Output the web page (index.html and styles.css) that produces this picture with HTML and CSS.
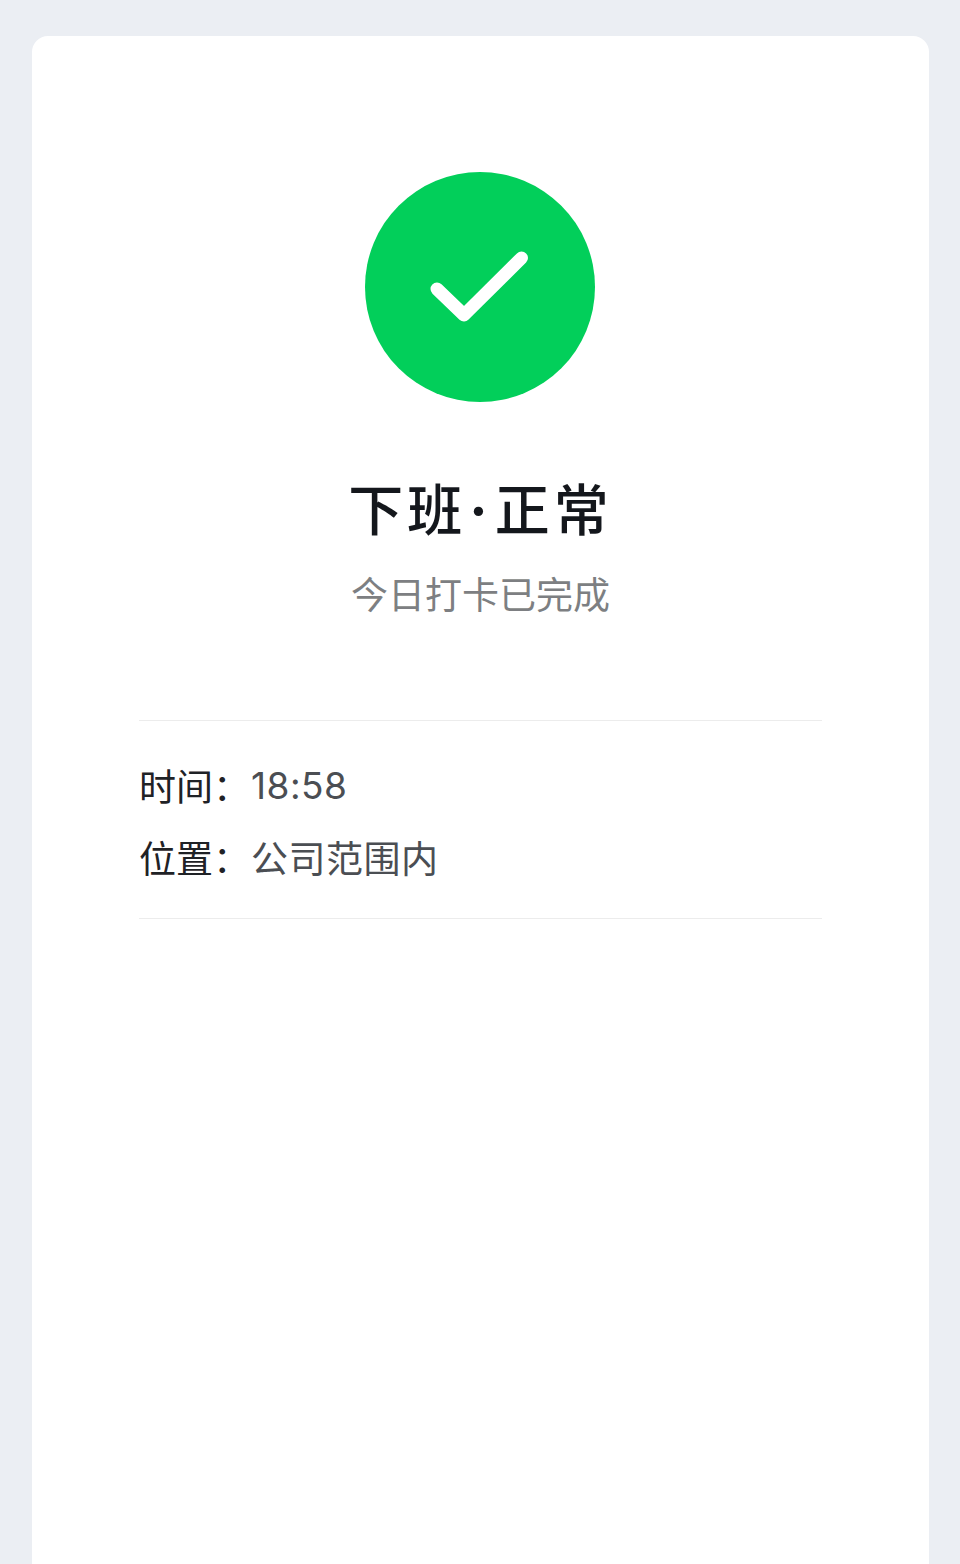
FILE: index.html
```html
<!DOCTYPE html>
<html>
	<head>
		<meta charset="utf-8">
		<title>下班·正常</title>
		<link rel="stylesheet" href="styles.css">
	</head>
	<body>
		<div class="card">
			<div class="result">
				<svg class="result-icon" width="230" height="230" viewBox="0 0 230 230">
					<circle cx="115" cy="115" r="115" fill="#02cf5a"/>
					<path d="M72 117 L99 143 L156.5 86" fill="none" stroke="#fff" stroke-width="13" stroke-linecap="round" stroke-linejoin="round"/>
				</svg>
				<div class="result-title">下班<span class="title-dot">·</span>正常</div>
				<div class="result-desc">今日打卡已完成</div>
			</div>
			<div class="info">
				<div class="info-row">
					<span class="info-label">时间：</span>
					<span class="info-value">18:58</span>
				</div>
				<div class="info-row">
					<span class="info-label">位置：</span>
					<span class="info-value">公司范围内</span>
				</div>
			</div>
		</div>
	</body>
</html>
```

FILE: styles.css
```css
body, html {
	height: 100%;
	min-height: 100%;
}

body {
	margin: 0;
	padding: 36px 31px 0 32px;
	box-sizing: border-box;
	background: #ebeef3;
	overflow: hidden;
	font-family: "Noto Sans CJK SC", "Noto Sans", sans-serif;
}

.card {
	box-sizing: border-box;
	height: 100%;
	padding: 136px 107px 0;
	background: #fff;
	border-radius: 16px 16px 0 0;
}

.result {
	display: flex;
	flex-direction: column;
	align-items: center;
	padding-bottom: 100px;
	border-bottom: 1px solid #ececec;
}

.result-icon {
	display: block;
	margin-right: 1px;
}

.result-title {
	margin-top: 61px;
	font-size: 55px;
	line-height: 86px;
	font-weight: 500;
	letter-spacing: 4px;
	color: #14171c;
}

.title-dot {
	margin: 0 3px;
	font-family: Inter, sans-serif;
	font-weight: 700;
}

.result-desc {
	margin-top: 13px;
	font-size: 37px;
	line-height: 54px;
	color: #7d7f82;
}

.info {
	padding: 28px 0 25px;
	border-bottom: 1px solid #ececec;
}

.info-row {
	display: flex;
	height: 72px;
	align-items: center;
	font-size: 37px;
}

.info-label {
	width: 112px;
	color: #1f2226;
}

.info-value {
	font-family: Inter, "Noto Sans CJK SC", sans-serif;
	letter-spacing: 0.5px;
	color: #4b4e53;
}
```
